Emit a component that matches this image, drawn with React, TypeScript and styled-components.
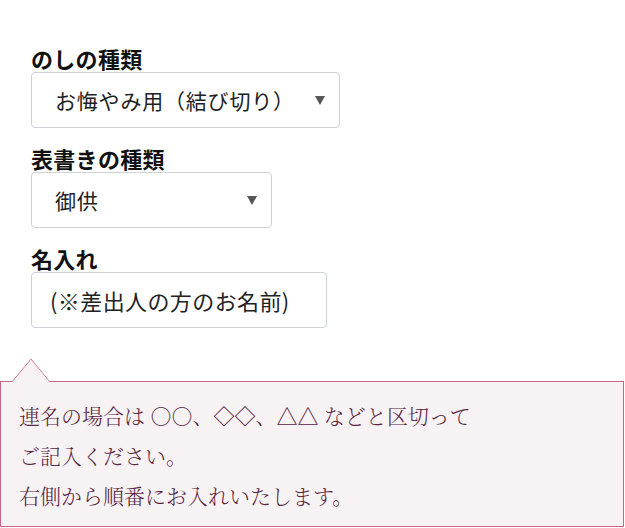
import React from "react";
import styled, { createGlobalStyle } from "styled-components";

const GlobalStyle = createGlobalStyle`
  html, body { margin: 0; padding: 0; background: #ffffff; }
  body { font-family: "Noto Sans CJK JP", "Noto Sans", sans-serif; }
`;

const Page = styled.div`
  width: 625px;
  height: 528px;
  overflow: hidden;
  display: flex;
  flex-direction: column;
`;

const Form = styled.div`
  display: flex;
  flex-direction: column;
  padding: 44px 0 0 31px;
`;

const Field = styled.div<{ $gap?: number }>`
  display: flex;
  flex-direction: column;
  margin-bottom: ${(p) => p.$gap ?? 16}px;
`;

const Label = styled.div`
  font-family: "Noto Sans CJK JP", sans-serif;
  font-weight: 700;
  font-size: 22px;
  line-height: 28px;
  color: #111;
  letter-spacing: 0.3px;
`;

const SelectBox = styled.div<{ $width: number }>`
  box-sizing: border-box;
  width: ${(p) => p.$width}px;
  height: 56px;
  border: 1px solid #cfd2d4;
  border-radius: 4px;
  background: #fff;
  display: flex;
  align-items: center;
  justify-content: space-between;
  padding: 0 14px 0 23px;
`;

const Value = styled.span`
  font-family: "Noto Sans CJK JP", sans-serif;
  font-size: 21px;
  color: #222;
  letter-spacing: 0.8px;
  white-space: nowrap;
`;

const Arrow = styled.svg`
  width: 10px;
  height: 9px;
  flex: none;
  fill: #555;
`;

const TextInput = styled.input`
  box-sizing: border-box;
  width: 296px;
  height: 56px;
  border: 1px solid #cfd2d4;
  border-radius: 4px;
  background: #fff;
  padding: 0 0 0 18px;
  margin: 0;
  font-family: "Noto Sans CJK JP", sans-serif;
  font-size: 22px;
  letter-spacing: 0.4px;
  color: #222;
  outline: none;
  &::placeholder { color: #222; opacity: 1; }
`;

const Tip = styled.div`
  position: relative;
  box-sizing: border-box;
  width: 624px;
  margin-top: 53px;
  background: #f7f3f4;
  border: 1px solid #c8668a;
  padding: 13px 0 11px 18px;
  font-family: "Noto Serif CJK JP", "Noto Sans CJK JP", serif;
  font-weight: 300;
  font-size: 21px;
  line-height: 40px;
  letter-spacing: 0;
  color: #58243f;
`;

const TipArrow = styled.svg`
  position: absolute;
  left: 10px;
  top: -24px;
  width: 40px;
  height: 25px;
  overflow: visible;
`;

const Line = styled.div`
  white-space: nowrap;
`;

const DownArrow = () => (
  <Arrow viewBox="0 0 10 9">
    <polygon points="0,0 10,0 5,9" />
  </Arrow>
);

export default function App() {
  return (
    <Page>
      <GlobalStyle />
      <Form>
        <Field>
          <Label>のしの種類</Label>
          <SelectBox $width={309}>
            <Value>お悔やみ用（結び切り）</Value>
            <DownArrow />
          </SelectBox>
        </Field>
        <Field>
          <Label>表書きの種類</Label>
          <SelectBox $width={241}>
            <Value>御供</Value>
            <DownArrow />
          </SelectBox>
        </Field>
        <Field $gap={0}>
          <Label>名入れ</Label>
          <TextInput placeholder="(※差出人の方のお名前)" />
        </Field>
      </Form>
      <Tip>
        <TipArrow viewBox="0 0 40 25">
          <polygon points="1,24.5 20,1 39,24.5" fill="#f7f3f4" />
          <polyline points="1,24 20,1 39,24" fill="none" stroke="#d27a98" strokeWidth="1" />
          <rect x="1.5" y="23.5" width="37" height="3" fill="#f7f3f4" />
        </TipArrow>
        <Line>連名の場合は ○○、◇◇、△△ などと区切って</Line>
        <Line>ご記入ください。</Line>
        <Line>右側から順番にお入れいたします。</Line>
      </Tip>
    </Page>
  );
}
